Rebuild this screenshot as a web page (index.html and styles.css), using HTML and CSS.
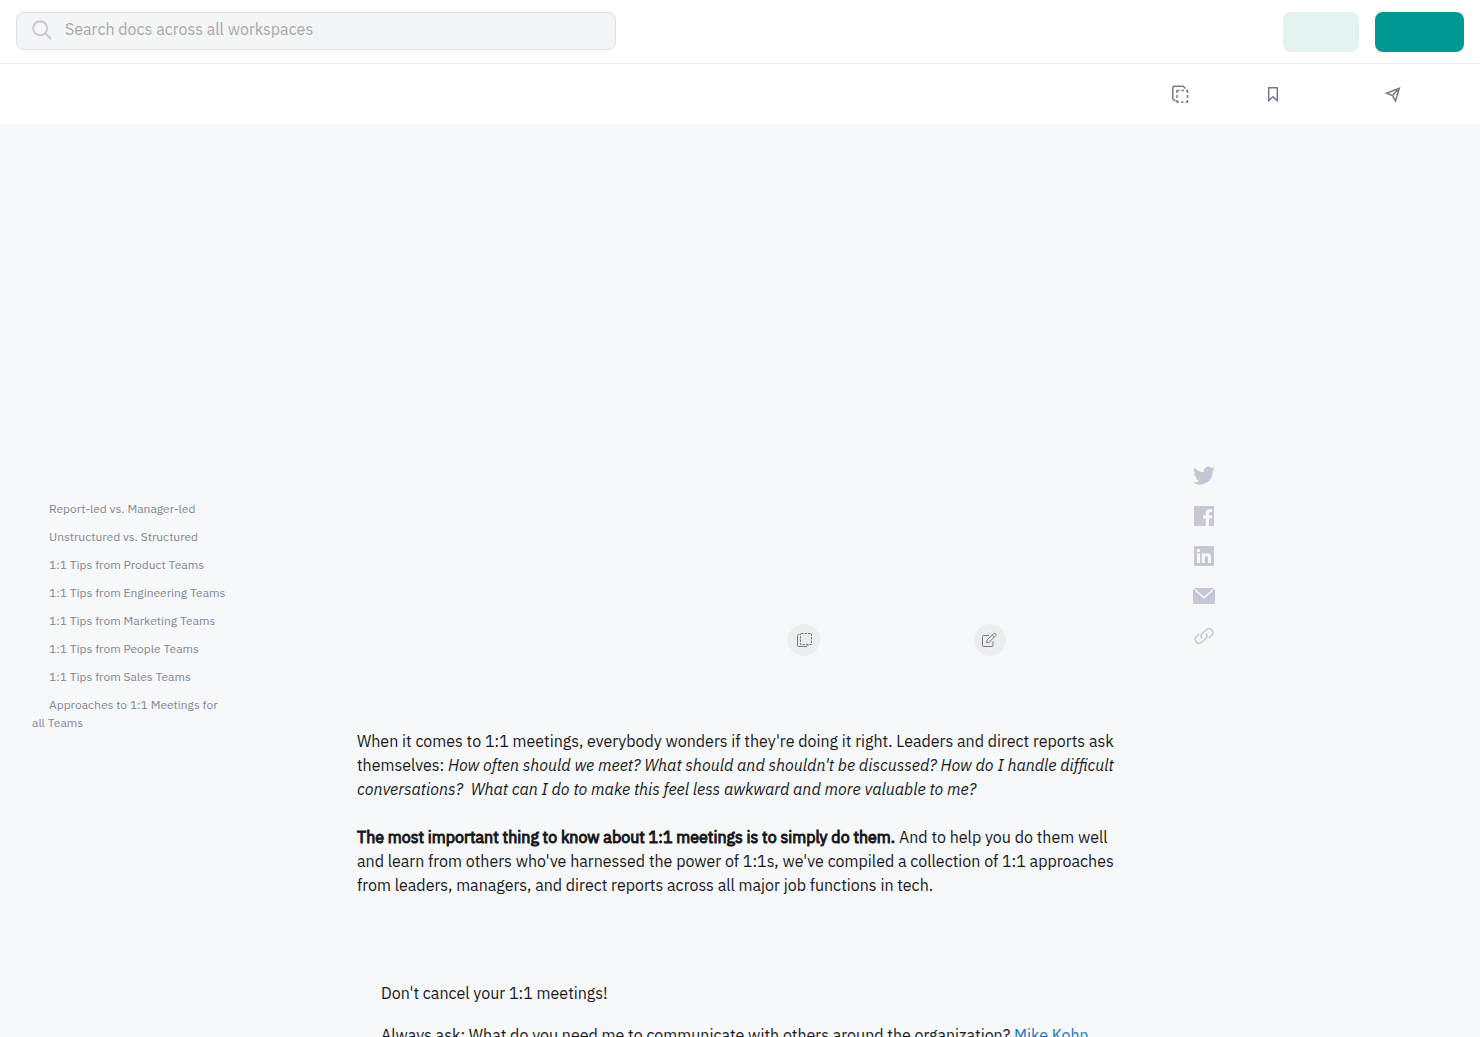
FILE: index.html
```html
<!DOCTYPE html>
<html lang="en">
<head>
<meta charset="utf-8">
<meta name="viewport" content="width=device-width, initial-scale=1">
<title>1:1 Meetings</title>
<link rel="stylesheet" href="styles.css">
</head>
<body>
<div class="page">
  <header class="topbar">
    <form class="search" role="search">
      <svg class="search-icon" viewBox="0 0 20 20" aria-hidden="true"><circle cx="8.200" cy="8.200" r="7"/><path d="M13.200 13.200L19 19"/></svg>
      <input class="search-input" type="search" placeholder="Search docs across all workspaces" aria-label="Search docs across all workspaces">
    </form>
    <div class="account">
      <button class="button button-light" type="button" aria-label="Log in"></button>
      <button class="button button-primary" type="button" aria-label="Sign up"></button>
    </div>
  </header>

  <nav class="toolbar" aria-label="Document actions">
    <button class="tool tool-copy" type="button" aria-label="Copy">
      <svg viewBox="0 0 18 18"><path d="M4.500 15.500H3.500L1.800 13.800V3Q1.800 1.200 3.500 1.200H12L14 3V3.700"/><path d="M6 8V5.500H8.500M10.500 5.500H13M15 5.500H16.500V8M16.500 10V13M16.500 15V17H14.500M12.500 17H10M8 17H6V15M6 13V10"/></svg>
    </button>
    <button class="tool tool-save" type="button" aria-label="Save">
      <svg viewBox="0 0 18 18"><path d="M4.700 2.700H13.300V15.500L9 11.800L4.700 15.500Z"/></svg>
    </button>
    <button class="tool tool-share" type="button" aria-label="Share">
      <svg viewBox="0 0 18 18"><path d="M2.700 8.200L15.300 3.200L11.500 16L8.500 10.500ZM8.500 10.500L15.300 3.200"/></svg>
    </button>
  </nav>

  <div class="layout">
    <nav class="contents" aria-label="Contents">
      <a href="#report-led">Report-led vs. Manager-led</a>
      <a href="#structured">Unstructured vs. Structured</a>
      <a href="#product">1:1 Tips from Product Teams</a>
      <a href="#engineering">1:1 Tips from Engineering Teams</a>
      <a href="#marketing">1:1 Tips from Marketing Teams</a>
      <a href="#people">1:1 Tips from People Teams</a>
      <a href="#sales">1:1 Tips from Sales Teams</a>
      <a href="#approaches">Approaches to 1:1 Meetings for all Teams</a>
    </nav>

    <main class="article">
      <div class="doc-actions">
        <button class="round" type="button" aria-label="Copy this doc">
          <svg viewBox="0 0 16 16"><path d="M3.500 2.500H2.500Q1.500 2.500 1.500 3.500V13.500Q1.500 14.500 2.500 14.500H11L12.500 13"/><path stroke-dasharray="2.500 1" d="M5 1.500H15.500V12.500H4.500V2Z"/></svg>
        </button>
        <button class="round" type="button" aria-label="Edit this doc">
          <svg viewBox="0 0 16 16"><path d="M7 3.500H1.500Q.5 3.500 .5 4.500V13.500Q.5 14.500 1.500 14.500H10Q11 14.500 11 13.500V9.500"/><path d="M4.500 10.800L5.200 7.800L11.500 1.700Q12.300 1 13.700 1.900Q14.600 2.800 13.900 3.600L7.300 10ZM10.500 3.200L12.500 5.100"/></svg>
        </button>
      </div>
      <p>When it comes to 1:1 meetings, everybody wonders if they're doing it right. Leaders and direct reports ask themselves: <em>How often should we meet? What should and shouldn't be discussed? How do I handle difficult conversations?&nbsp; What can I do to make this feel less awkward and more valuable to me?</em></p>
      <p><strong>The most important thing to know about 1:1 meetings is to simply do them.</strong> And to help you do them well and learn from others who've harnessed the power of 1:1s, we've compiled a collection of 1:1 approaches from leaders, managers, and direct reports across all major job functions in tech.</p>
      <div class="tips">
        <p>Don't cancel your 1:1 meetings!</p>
        <p>Always ask: What do you need me to communicate with others around the organization? <a href="#mike">Mike Kohn</a></p>
      </div>
    </main>

    <aside class="share" aria-label="Share this doc">
      <a href="#twitter" aria-label="Twitter"><svg viewBox="0 0 24 24"><path d="M23 4.800a9 9 0 0 1-2.600.7 4.500 4.500 0 0 0 2-2.500 9 9 0 0 1-2.900 1.100 4.500 4.500 0 0 0-7.700 4.100A12.800 12.800 0 0 1 2.500 3.500a4.500 4.500 0 0 0 1.400 6 4.500 4.500 0 0 1-2-.6c0 2.200 1.500 4.100 3.600 4.500a4.500 4.500 0 0 1-2 .1 4.500 4.500 0 0 0 4.200 3.100A9 9 0 0 1 1 18.500 12.800 12.800 0 0 0 20.700 7.100 9 9 0 0 0 23 4.800Z"/></svg></a>
      <a href="#facebook" aria-label="Facebook"><svg viewBox="0 0 24 24"><path d="M3 2H21Q22 2 22 3V21Q22 22 21 22H17V14.500H19.700L20 11.300H17V9.500Q17 8.200 18.400 8.200H20V5.200H17.500Q13.700 5.200 13.700 9V11.300H11V14.500H13.700V22H3Q2 22 2 21V3Q2 2 3 2Z"/></svg></a>
      <a href="#linkedin" aria-label="LinkedIn"><svg viewBox="0 0 24 24"><path fill-rule="evenodd" d="M3 2H21Q22 2 22 3V21Q22 22 21 22H3Q2 22 2 21V3Q2 2 3 2ZM5 9.500V19H8V9.500ZM6.500 4.800A1.700 1.700 0 1 0 6.500 8.200A1.700 1.700 0 1 0 6.500 4.800ZM9.800 9.500V19H12.800V14Q12.800 12 14.500 12Q16 12 16 14V19H19V13.500Q19 9.200 15.500 9.200Q13.600 9.200 12.700 10.700V9.500Z"/></svg></a>
      <a href="#email" aria-label="Email"><svg viewBox="0 0 24 24"><path d="M2 4H22L12 12.800ZM1 4.800L12 14.800L23 4.800V19Q23 20 22 20H2Q1 20 1 19Z"/></svg></a>
      <a href="#link" aria-label="Copy link"><svg class="link-icon" viewBox="0 0 24 24"><path d="M10 14.500A3.800 3.800 0 0 1 10.200 9.500L14.200 5.700A3.900 3.900 0 0 1 19.700 11.200L16.800 14"/><path d="M14 9.500A3.800 3.800 0 0 1 13.800 14.500L9.800 18.300A3.900 3.900 0 0 1 4.300 12.800L7.200 10"/></svg></a>
    </aside>
  </div>
</div>
</body>
</html>
```

FILE: styles.css
```css
* {
  box-sizing: border-box;
}

body {
  margin: 0;
  background: #f7f8fa;
  color: #16181d;
  font: 16px/24px "IBM Plex Sans", Roboto, sans-serif;
}

button {
  padding: 0;
  border: 0;
  background: none;
  cursor: pointer;
}

.page {
  display: flex;
  flex-direction: column;
  height: 100vh;
  overflow: hidden;
}

.topbar {
  display: flex;
  flex: none;
  align-items: flex-start;
  justify-content: space-between;
  gap: 16px;
  height: 64px;
  padding: 12px 16px;
  border-bottom: 1px solid #ebecee;
  background: #fff;
}

.search {
  display: flex;
  flex: 0 1 600px;
  align-items: center;
  gap: 13px;
  height: 38px;
  padding: 0 15px 2px;
  border: 1px solid #dcdfe6;
  border-radius: 8px;
  background: #f4f5f7;
}

.search-icon {
  flex: none;
  width: 20px;
  height: 20px;
  fill: none;
  stroke: #c4c9d4;
  stroke-width: 2;
}

.search-input {
  flex: 1;
  min-width: 0;
  padding: 0 0 2px;
  border: 0;
  outline: 0;
  background: none;
  font: inherit;
}

.search-input::placeholder {
  color: #a9a9a9;
}

.account {
  display: flex;
  gap: 16px;
}

.button {
  height: 40px;
  border-radius: 8px;
}

.button-light {
  width: 76px;
  background: #e4f2f1;
}

.button-primary {
  width: 89px;
  background: #009892;
}

.toolbar {
  display: flex;
  flex: none;
  align-items: center;
  justify-content: flex-end;
  height: 60px;
  padding: 0 16px;
  background: #fff;
}

.tool {
  display: flex;
}

.tool svg {
  width: 18px;
  height: 18px;
  fill: none;
  stroke: #737a8a;
  stroke-width: 1.5;
}

.tool-copy {
  width: 93px;
}

.tool-save {
  width: 120px;
}

.tool-share {
  width: 80px;
}

.layout {
  display: grid;
  grid-template-columns: minmax(0, 1fr) minmax(0, 776px) minmax(0, 1fr);
  padding: 0 22px 0 32px;
}

.contents {
  display: flex;
  flex-direction: column;
  gap: 10px;
  max-width: 200px;
  padding-top: 376px;
  font-size: 12px;
  line-height: 18px;
  text-indent: 17px;
}

.contents a {
  color: #808696;
  text-decoration: none;
}

.article {
  padding-top: 500px;
}

.article p {
  margin: 0 0 24px;
}

.article em {
  font-style: oblique 20deg;
}

.article strong {
  font-weight: 400;
  -webkit-text-stroke: 1px currentColor;
}

.doc-actions {
  display: flex;
  justify-content: flex-end;
  gap: 154px;
  margin-bottom: 73px;
  padding-right: 127px;
}

.round {
  display: flex;
  align-items: center;
  justify-content: center;
  width: 32px;
  height: 32px;
  border-radius: 50%;
  background: #ecedef;
}

.round svg {
  width: 16px;
  height: 16px;
  fill: none;
  stroke: #737a8a;
}

.tips {
  padding: 60px 24px 0;
}

.tips p {
  margin-bottom: 18px;
}

.tips a {
  color: #2175bd;
  text-decoration: none;
}

.share {
  display: flex;
  flex-direction: column;
  align-items: flex-start;
  gap: 16px;
  padding: 340px 0 0 59px;
}

.share a {
  display: flex;
}

.share svg {
  width: 24px;
  height: 24px;
  fill: #c4c8d3;
}

.share .link-icon {
  fill: none;
  stroke: #c4c8d3;
  stroke-width: 1.5;
}
```
